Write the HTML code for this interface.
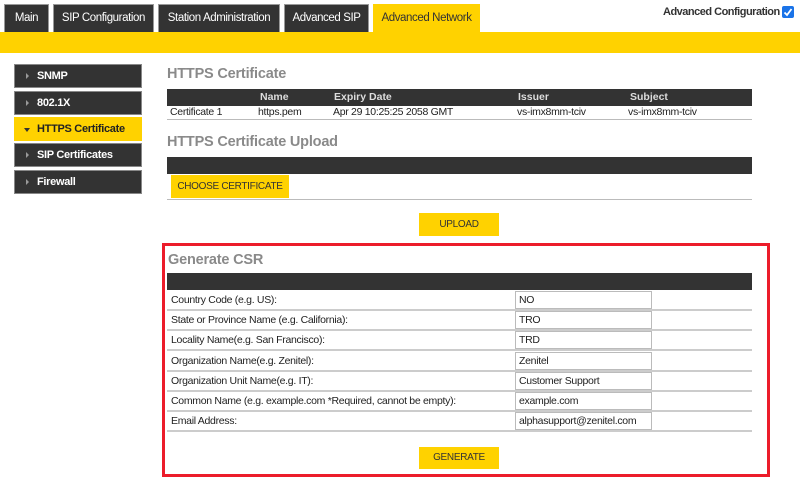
<!DOCTYPE html>
<html><head><meta charset="utf-8"><style>
*{margin:0;padding:0;box-sizing:border-box}
body{width:800px;height:481px;background:#fff;font-family:"Liberation Sans",sans-serif;font-size:11px;color:#222;position:relative;overflow:hidden}
.a{position:absolute}
.tab{position:absolute;top:4px;height:28px;background:#333;color:#fff;border:1px solid #999;border-bottom:none;font-size:11.5px;line-height:27px;text-align:center;letter-spacing:-0.4px}
.side{position:absolute;left:14px;width:128px;height:24px;background:#333;color:#fff;border:1px solid #888;font-size:11px;font-weight:bold;line-height:22px;padding-left:22px;letter-spacing:-0.3px}
.side:before{content:"";position:absolute;left:11px;top:8px;border-left:3px solid #999;border-top:3px solid transparent;border-bottom:3px solid transparent}
.side.on{background:#ffd200;color:#222;border-color:#ffd200}
.side.on:before{left:9px;top:10px;border-top:4px solid #333;border-left:3px solid transparent;border-right:3px solid transparent;border-bottom:none}
.h{position:absolute;color:#8a8a8a;font-weight:bold;font-size:14.5px;letter-spacing:-0.2px}
.bar{position:absolute;background:#333;height:17px}
.btn{position:absolute;background:#ffd200;color:#333;font-size:10px;text-align:center;letter-spacing:-0.3px}
.row{position:absolute;left:167px;width:585px;height:20px;border-bottom:2px solid #ccc;font-size:10.5px;line-height:18px;padding-left:4px;letter-spacing:-0.3px}
.inp{position:absolute;left:348px;top:0;width:137px;height:18px;border:1px solid #bbb;padding-left:3px;line-height:16px;font-size:10.5px}
</style></head><body>
<div class="tab" style="left:4px;width:45px">Main</div>
<div class="tab" style="left:53px;width:101px">SIP Configuration</div>
<div class="tab" style="left:158px;width:122px">Station Administration</div>
<div class="tab" style="left:284px;width:85px">Advanced SIP</div>
<div class="tab" style="left:373px;width:107px;background:#ffd200;color:#333;border-color:#ffd200">Advanced Network</div>
<div class="a" style="left:663px;top:6px;width:116px;font-size:11px;font-weight:bold;color:#333;letter-spacing:-0.5px;white-space:nowrap">Advanced Configuration</div>
<div class="a" style="left:782px;top:6px;width:12px;height:12px;background:#1a73e8;border-radius:2px"><svg width="12" height="12"><path d="M2.5 6.5L5 9L9.5 3" stroke="#fff" stroke-width="1.8" fill="none"/></svg></div>
<div class="a" style="left:0;top:32px;width:800px;height:21px;background:#ffd200"></div>

<div class="side" style="top:64px">SNMP</div>
<div class="side" style="top:91px">802.1X</div>
<div class="side on" style="top:117px">HTTPS Certificate</div>
<div class="side" style="top:143px">SIP Certificates</div>
<div class="side" style="top:170px">Firewall</div>

<div class="h" style="left:167px;top:66px">HTTPS Certificate</div>
<div class="bar" style="left:167px;top:89px;width:585px;color:#ddd;font-weight:bold;font-size:10.5px;line-height:17px">
<span class="a" style="left:93px">Name</span><span class="a" style="left:167px">Expiry Date</span><span class="a" style="left:351px">Issuer</span><span class="a" style="left:463px">Subject</span></div>
<div class="a" style="left:167px;top:106px;width:585px;height:14px;border-bottom:1px solid #bbb;font-size:10.5px;line-height:13px;letter-spacing:-0.3px">
<span class="a" style="left:3px">Certificate 1</span><span class="a" style="left:91px">https.pem</span><span class="a" style="left:166px">Apr 29 10:25:25 2058 GMT</span><span class="a" style="left:350px">vs-imx8mm-tciv</span><span class="a" style="left:461px">vs-imx8mm-tciv</span></div>

<div class="h" style="left:167px;top:134px">HTTPS Certificate Upload</div>
<div class="bar" style="left:167px;top:157px;width:585px"></div>
<div class="btn" style="left:171px;top:175px;width:118px;height:23px;line-height:23px">CHOOSE CERTIFICATE</div>
<div class="a" style="left:167px;top:199px;width:585px;height:1px;background:#bbb"></div>
<div class="btn" style="left:419px;top:213px;width:80px;height:23px;line-height:23px">UPLOAD</div>

<div class="a" style="left:162px;top:243px;width:608px;height:234px;border:3px solid #ec1c2a"></div>
<div class="h" style="left:168px;top:252px">Generate CSR</div>
<div class="bar" style="left:167px;top:273px;width:585px"></div>
<div class="row" style="top:291px">Country Code (e.g. US):<div class="inp">NO</div></div>
<div class="row" style="top:311px">State or Province Name (e.g. California):<div class="inp">TRO</div></div>
<div class="row" style="top:331px">Locality Name(e.g. San Francisco):<div class="inp">TRD</div></div>
<div class="row" style="top:352px">Organization Name(e.g. Zenitel):<div class="inp">Zenitel</div></div>
<div class="row" style="top:372px">Organization Unit Name(e.g. IT):<div class="inp">Customer Support</div></div>
<div class="row" style="top:392px">Common Name (e.g. example.com *Required, cannot be empty):<div class="inp">example.com</div></div>
<div class="row" style="top:412px">Email Address:<div class="inp">alphasupport@zenitel.com</div></div>
<div class="btn" style="left:419px;top:447px;width:80px;height:22px;line-height:22px">GENERATE</div>
</body></html>
